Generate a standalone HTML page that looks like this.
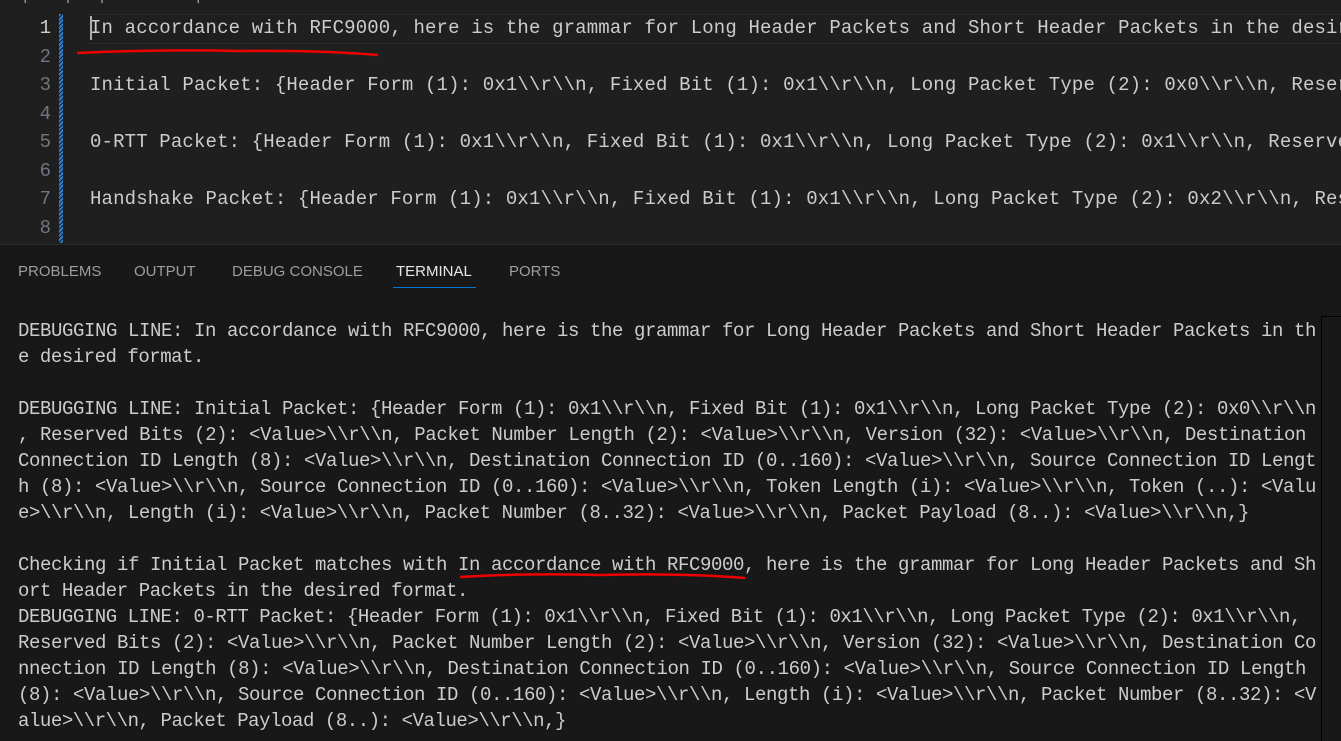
<!DOCTYPE html>
<html><head><meta charset="utf-8"><style>
body{margin:0;width:1341px;height:740px;overflow:hidden;background:#181818;position:relative;font-family:"Liberation Mono",monospace}
.ed{position:absolute;left:0;top:0;width:1341px;height:244px;background:#1f1f1f;overflow:hidden}
.crumb{position:absolute;left:12px;top:-13px;font:15px "Liberation Sans",sans-serif;color:#a0a0a0;white-space:pre}
.ln{position:absolute;left:0;width:51px;text-align:right;font-size:19px;color:#6e7681}
.tx{position:absolute;left:90px;font-size:19px;letter-spacing:0.15px;color:#cccccc;white-space:pre}
.gut{position:absolute;left:59px;top:14px;width:4px;height:229px;background:repeating-linear-gradient(135deg,#2b7fd6 0 2px,#1f1f1f 2px 3px)}
.cur{position:absolute;left:88px;top:14px;width:1253px;height:28px;border-top:1px solid #2a2a2a;border-bottom:1px solid #2a2a2a}
.panel{position:absolute;left:0;top:244px;width:1341px;height:1px;background:#2b2b2b}
.tab{position:absolute;top:263px;font:15px "Liberation Sans",sans-serif;color:#9d9d9d}
.term{position:absolute;left:18px;top:318px;width:1310px;font-size:19px;line-height:26px;color:#cccccc;overflow:hidden}
.term div{height:26px;white-space:pre;overflow:visible}
.term span{white-space:pre}
</style></head><body>
<div class="ed">
<div class="crumb">input  ›  prompts1u  ›  ≡  output0.txt</div>
<div class="cur"></div>
<div style="position:absolute;left:90px;top:16px;width:2px;height:24px;background:#aeafad"></div>
<div class="gut"></div>
<div class="ln" style="top:17px;color:#cccccc">1</div>
<div class="ln" style="top:46px">2</div>
<div class="ln" style="top:74px">3</div>
<div class="ln" style="top:103px">4</div>
<div class="ln" style="top:131px">5</div>
<div class="ln" style="top:160px">6</div>
<div class="ln" style="top:188px">7</div>
<div class="ln" style="top:217px">8</div>
<div class="tx" style="top:17px">In accordance with RFC9000, here is the grammar for Long Header Packets and Short Header Packets in the desired format.</div>
<div class="tx" style="top:74px">Initial Packet: {Header Form (1): 0x1\\r\\n, Fixed Bit (1): 0x1\\r\\n, Long Packet Type (2): 0x0\\r\\n, Reserved</div>
<div class="tx" style="top:131px">0-RTT Packet: {Header Form (1): 0x1\\r\\n, Fixed Bit (1): 0x1\\r\\n, Long Packet Type (2): 0x1\\r\\n, Reserved</div>
<div class="tx" style="top:188px">Handshake Packet: {Header Form (1): 0x1\\r\\n, Fixed Bit (1): 0x1\\r\\n, Long Packet Type (2): 0x2\\r\\n, Reserved</div>
<svg style="position:absolute;left:0;top:0" width="400" height="70"><path d="M77 53 Q160 49 240 51 Q320 50 378 55" stroke="#e00" stroke-width="2.5" fill="none"/></svg>
</div>
<div class="panel"></div>
<div class="tab" style="left:18px">PROBLEMS</div>
<div class="tab" style="left:134px">OUTPUT</div>
<div class="tab" style="left:232px">DEBUG CONSOLE</div>
<div class="tab" style="left:396px;color:#e7e7e7">TERMINAL</div>
<div style="position:absolute;left:393px;top:287px;width:83px;height:1px;background:#0078d4"></div>
<div class="tab" style="left:509px">PORTS</div>
<div style="position:absolute;left:1321px;top:316px;width:20px;height:424px;border-left:1px solid #000;border-top:1px solid #000"></div>
<div class="term" id="t">
<div><span title="1298">DEBUGGING LINE: In accordance with RFC9000, here is the grammar for Long Header Packets and Short Header Packets in th</span></div>
<div><span title="186">e desired format.</span></div>
<div></div>
<div><span title="1298">DEBUGGING LINE: Initial Packet: {Header Form (1): 0x1\\r\\n, Fixed Bit (1): 0x1\\r\\n, Long Packet Type (2): 0x0\\r\\n</span></div>
<div><span title="1288">, Reserved Bits (2): &lt;Value&gt;\\r\\n, Packet Number Length (2): &lt;Value&gt;\\r\\n, Version (32): &lt;Value&gt;\\r\\n, Destination</span></div>
<div><span title="1298">Connection ID Length (8): &lt;Value&gt;\\r\\n, Destination Connection ID (0..160): &lt;Value&gt;\\r\\n, Source Connection ID Lengt</span></div>
<div><span title="1298">h (8): &lt;Value&gt;\\r\\n, Source Connection ID (0..160): &lt;Value&gt;\\r\\n, Token Length (i): &lt;Value&gt;\\r\\n, Token (..): &lt;Valu</span></div>
<div><span title="1231">e&gt;\\r\\n, Length (i): &lt;Value&gt;\\r\\n, Packet Number (8..32): &lt;Value&gt;\\r\\n, Packet Payload (8..): &lt;Value&gt;\\r\\n,}</span></div>
<div></div>
<div><span title="1298">Checking if Initial Packet matches with In accordance with RFC9000, here is the grammar for Long Header Packets and Sh</span></div>
<div><span title="450">ort Header Packets in the desired format.</span></div>
<div><span title="1283">DEBUGGING LINE: 0-RTT Packet: {Header Form (1): 0x1\\r\\n, Fixed Bit (1): 0x1\\r\\n, Long Packet Type (2): 0x1\\r\\n,</span></div>
<div><span title="1298">Reserved Bits (2): &lt;Value&gt;\\r\\n, Packet Number Length (2): &lt;Value&gt;\\r\\n, Version (32): &lt;Value&gt;\\r\\n, Destination Co</span></div>
<div><span title="1288">nnection ID Length (8): &lt;Value&gt;\\r\\n, Destination Connection ID (0..160): &lt;Value&gt;\\r\\n, Source Connection ID Length</span></div>
<div><span title="1298">(8): &lt;Value&gt;\\r\\n, Source Connection ID (0..160): &lt;Value&gt;\\r\\n, Length (i): &lt;Value&gt;\\r\\n, Packet Number (8..32): &lt;V</span></div>
<div><span title="548">alue&gt;\\r\\n, Packet Payload (8..): &lt;Value&gt;\\r\\n,}</span></div>
</div>
<svg style="position:absolute;left:0;top:560px" width="800" height="30"><path d="M460 17 Q520 13 600 15 Q680 13 745 18" stroke="#e00" stroke-width="2.5" fill="none"/></svg>
<script>
document.querySelectorAll('#t span').forEach(function(s){
  var target=parseFloat(s.getAttribute('title'));s.removeAttribute('title');
  var w=s.getBoundingClientRect().width,n=s.textContent.length;
  s.style.letterSpacing=((target-w)/n)+'px';
});
</script>
</body></html>
